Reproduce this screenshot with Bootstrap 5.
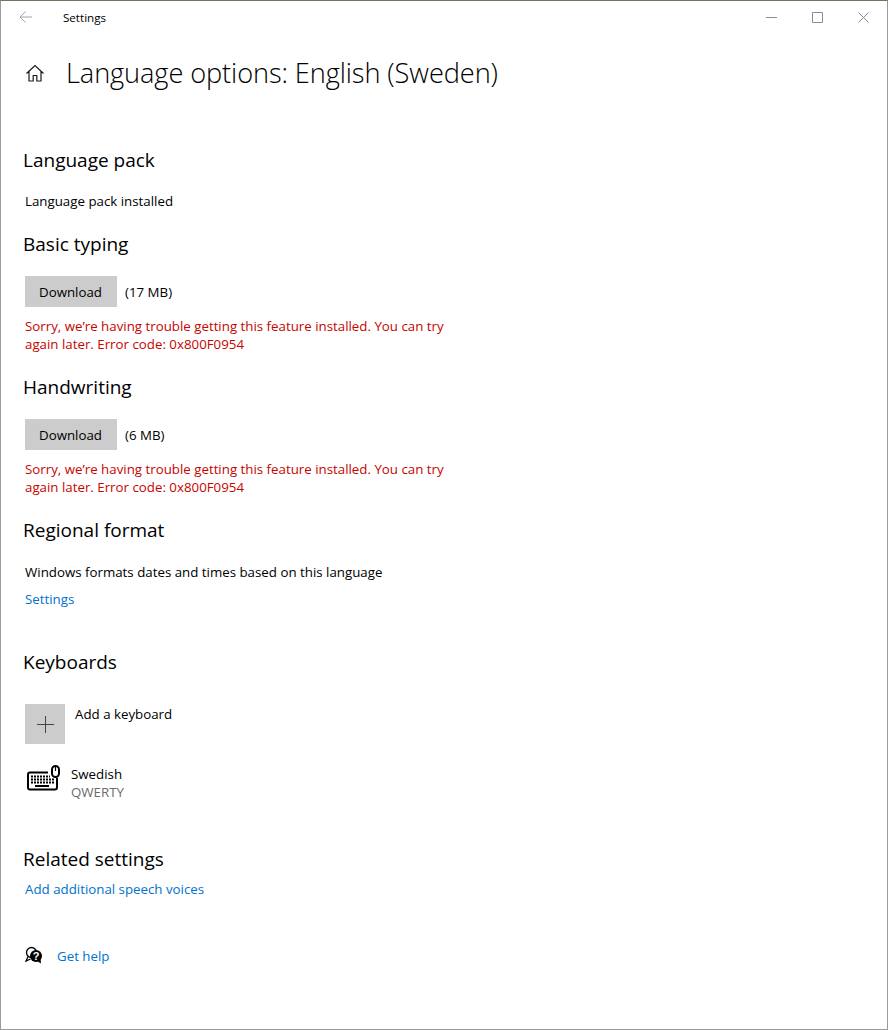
<!DOCTYPE html>
<html lang="en">
<head>
  <meta charset="UTF-8" />
  <title>Settings</title>
  <link href="https://cdn.jsdelivr.net/npm/bootstrap@5.3.2/dist/css/bootstrap.min.css" rel="stylesheet" />
  <style>
    html, body { height: 100%; }
    body { font-family: "Open Sans", "Noto Sans", sans-serif; font-size: 13.3px; color: #000; background: #fff; }
    .win-frame { height: 1030px; border: 1px solid #9a9a9a; border-top: 1px solid #6d7560; position: relative; overflow: hidden; }
    .edge-tint { position: absolute; left: -1px; top: 32px; width: 1px; height: 24px; background: #2a6a94; }
    .title-bar { height: 32px; padding-left: 18px; }
    .title-txt { margin-left: 31px; font-size: 11.6px; margin-top: 1px; }
    .ctrl-group { margin-right: 1px; }
    .win-ctrl { width: 46px; height: 32px; }
    .page-head { height: 50px; margin-top: 15px; padding-left: 24px; }
    .page-title { font-size: 27.2px; font-weight: 300; margin: 0 0 0 21px; line-height: 36px; letter-spacing: -.1px; }
    .sec-head { font-size: 19px; font-weight: 400; line-height: 26px; margin: 0 0 0 22px; }
    .sec-body { margin-left: 24px; line-height: 18px; }
    .dl-btn { width: 92px; height: 31px; background: #ccc; border: 0; border-radius: 0; padding: 3px 1px 0 0; font-size: 13.3px; color: #000; }
    .err-txt { color: #c50500; width: 430px; line-height: 18px; }
    .ms-link { color: #0072d0; text-decoration: none; }
    .plus-box { width: 40px; height: 40px; background: #ccc; }
    .sub-txt { color: #6b6b6b; }
  </style>
</head>
<body>
  <div class="win-frame">
    <div class="edge-tint"></div>

    <div class="title-bar d-flex align-items-center">
      <svg width="13" height="12" viewBox="0 0 13 12" fill="none" stroke="#a3a3a3" stroke-width="1"><path d="M1 6h12M6.500.5 1 6l5.500 5.500"/></svg>
      <span class="title-txt">Settings</span>
      <div class="ms-auto d-flex ctrl-group">
        <div class="win-ctrl d-flex align-items-center justify-content-center">
          <svg width="11" height="11" viewBox="0 0 11 11" stroke="#8c8c8c" fill="none"><path d="M0 5.500h11"/></svg>
        </div>
        <div class="win-ctrl d-flex align-items-center justify-content-center">
          <svg width="11" height="11" viewBox="0 0 11 11" stroke="#8c8c8c" fill="none"><path d="M.5.5h10v10H.5z"/></svg>
        </div>
        <div class="win-ctrl d-flex align-items-center justify-content-center">
          <svg width="11" height="11" viewBox="0 0 11 11" stroke="#8c8c8c" fill="none"><path d="M.5.5l10 10M10.500.5l-10 10"/></svg>
        </div>
      </div>
    </div>

    <div class="page-head d-flex align-items-center">
      <svg width="20" height="20" viewBox="0 0 20 20" fill="none" stroke="#1a1a1a" stroke-width="1.2"><path d="M1.500 10.500 10 2.500l8.500 8M4 8.500V18h4.200v-5.500h3.600V18H16V8.500"/></svg>
      <h1 class="page-title">Language options: English (Sweden)</h1>
    </div>

    <h2 class="sec-head" style="margin-top:49px">Language pack</h2>
    <div class="sec-body" style="margin-top:19px">Language pack installed</div>

    <h2 class="sec-head" style="margin-top:21px">Basic typing</h2>
    <div class="sec-body d-flex align-items-center gap-2" style="margin-top:19px">
      <button class="btn dl-btn" type="button">Download</button><span>(17 MB)</span>
    </div>
    <div class="sec-body err-txt" style="margin-top:10px">Sorry, we’re having trouble getting this feature installed. You can try again later. Error code: 0x800F0954</div>

    <h2 class="sec-head" style="margin-top:21px">Handwriting</h2>
    <div class="sec-body d-flex align-items-center gap-2" style="margin-top:19px">
      <button class="btn dl-btn" type="button">Download</button><span>(6 MB)</span>
    </div>
    <div class="sec-body err-txt" style="margin-top:10px">Sorry, we’re having trouble getting this feature installed. You can try again later. Error code: 0x800F0954</div>

    <h2 class="sec-head" style="margin-top:21px">Regional format</h2>
    <div class="sec-body" style="margin-top:20px">Windows formats dates and times based on this language</div>
    <div class="sec-body" style="margin-top:9px"><a class="ms-link" href="#">Settings</a></div>

    <h2 class="sec-head" style="margin-top:41px">Keyboards</h2>
    <div class="sec-body d-flex" style="margin-top:29px">
      <div class="plus-box d-flex align-items-center justify-content-center">
        <svg width="17" height="17" viewBox="0 0 17 17" stroke="#444" fill="none"><path d="M8.500 0v17M0 8.500h17"/></svg>
      </div>
      <div style="margin-left:10px;margin-top:1px">Add a keyboard</div>
    </div>
    <div class="sec-body d-flex" style="margin-top:21px">
      <svg width="35" height="27" viewBox="0 0 35 27" fill="none" stroke="#000">
        <path d="M23 7.500H5C3.500 7.500 3 8.500 3 9.500v13c0 1 .5 2 2 2h25c1.500 0 2-1 2-2V13" stroke-width="2"/>
        <rect x="27" y="1" width="7" height="11" rx="3.500" stroke-width="2"/>
        <path d="M30.500 2v4" stroke-width="1.200"/>
        <path d="M6 11.500h19M6 14.500h23M6 17.500h23" stroke-width="2" stroke-dasharray="2 1"/>
        <path d="M10 21h14" stroke-width="2"/>
      </svg>
      <div style="margin-left:11px">
        <div>Swedish</div>
        <div class="sub-txt">QWERTY</div>
      </div>
    </div>

    <h2 class="sec-head" style="margin-top:45px">Related settings</h2>
    <div class="sec-body" style="margin-top:8px"><a class="ms-link" href="#">Add additional speech voices</a></div>

    <div class="sec-body d-flex align-items-center" style="margin-top:48px">
      <svg width="20" height="20" viewBox="0 0 20 20">
        <path d="M3 10.500 1 15l4.500-2" fill="#fff" stroke="#000" stroke-width="1.300"/>
        <circle cx="6.500" cy="6.500" r="5" fill="#fff" stroke="#000" stroke-width="1.300"/>
        <circle cx="11" cy="10" r="6" fill="#000"/>
        <path d="M12 15l4 2.500-.5-5z" fill="#000"/>
        <text x="11" y="14" font-size="11" font-weight="700" fill="#fff" text-anchor="middle" font-family="Liberation Sans, sans-serif">?</text>
      </svg>
      <a class="ms-link" href="#" style="margin-left:12px">Get help</a>
    </div>
  </div>
  <script src="https://cdn.jsdelivr.net/npm/bootstrap@5.3.2/dist/js/bootstrap.bundle.min.js"></script>
</body>
</html>
